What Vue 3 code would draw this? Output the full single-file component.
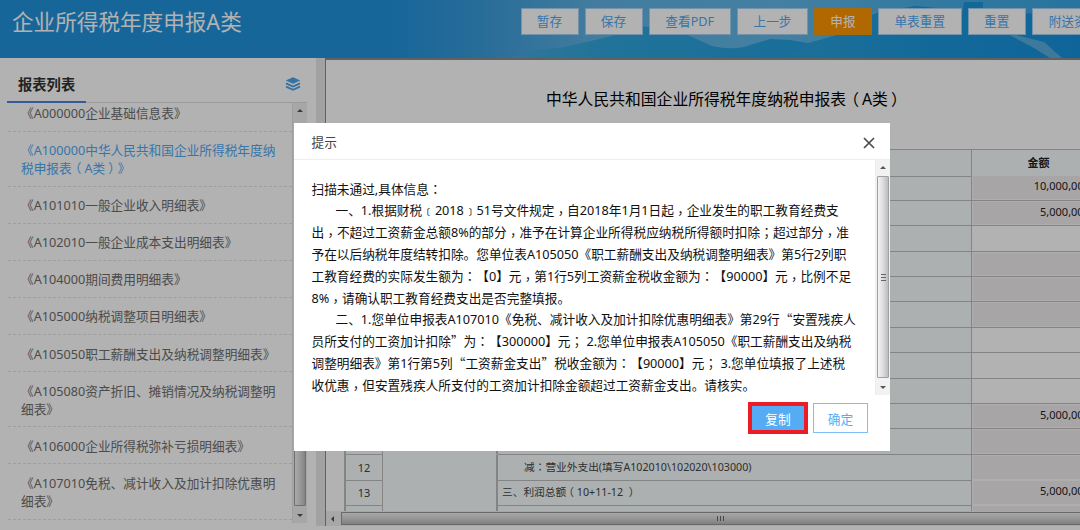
<template>
  <div class="page">
    <header class="top">
      <svg class="scene" viewBox="0 0 1080 58" preserveAspectRatio="none">
        <defs>
          <linearGradient id="sky">
            <stop offset="0.36" stop-color="#2192dd" />
            <stop offset="0.45" stop-color="#3b9ddc" />
            <stop offset="0.55" stop-color="#60b2e3" />
            <stop offset="0.72" stop-color="#62b8e8" />
            <stop offset="0.85" stop-color="#4bafe6" />
            <stop offset="1" stop-color="#3aa6e2" />
          </linearGradient>
          <linearGradient id="hill">
            <stop offset="0" stop-color="#46a8de" />
            <stop offset="0.25" stop-color="#2fa5dc" />
            <stop offset="1" stop-color="#1f9ade" />
          </linearGradient>
          <linearGradient id="near">
            <stop offset="0" stop-color="#2aa2da" />
            <stop offset="0.5" stop-color="#1b97dc" />
            <stop offset="1" stop-color="#1690dc" />
          </linearGradient>
        </defs>
        <rect width="1080" height="58" fill="url(#sky)" />
        <path d="M512 58 L528 50 L560 48 L582 43 L608 37 L628 30 L642 26 L656 28 L690 36 L712 46 Q735 51 750 45 L770 39 L790 40 L808 43 L840 36 L900 30 V58 Z" fill="url(#hill)" />
        <path d="M790 58 L812 42 L840 34 L858 20 L880 12 L915 6 L950 9 L962 14 L964 2 H983 V9 L1010 14 L1080 12 V58 Z" fill="url(#near)" />
        <path d="M1000 30 L1020 36 L1044 42 L1062 58 H1050 L1034 48 Z" fill="#5aaee0" />
      </svg>
      <h1 class="brand">企业所得税年度申报A类</h1>
      <div class="actions">
        <button
          v-for="a in actions"
          :key="a.text"
          class="btn"
          :class="{ active: a.active }"
          :style="{ width: a.width + 'px' }"
        >{{ a.text }}</button>
      </div>
    </header>

    <div class="main">
      <aside class="side">
        <div class="side-head">
          <span class="side-title">报表列表</span>
          <svg class="layers" viewBox="0 0 16 14">
            <path d="M8 0.3 L15.3 3.4 L8 6.7 L0.7 3.4 Z" fill="currentColor" />
            <path d="M1 6.4 L8 9.5 L15 6.4 M1 9.6 L8 12.7 L15 9.6" fill="none" stroke="currentColor" stroke-width="1.8" />
          </svg>
        </div>
        <div class="side-body">
          <ul class="list">
            <li v-for="(r, i) in reports" :key="i" :class="{ current: i === 1 }">
              <div v-for="line in r" :key="line">
                <span v-for="(s, j) in split(line)" :key="j" :class="s.cls">{{ s.text }}</span>
              </div>
            </li>
          </ul>
          <div class="bar">
            <i class="arrow up"></i>
            <div class="thumb side-thumb"></div>
            <i class="arrow down"></i>
          </div>
        </div>
      </aside>

      <section class="sheet">
        <h2 class="sheet-title">
          <span v-for="(s, j) in split('中华人民共和国企业所得税年度纳税申报表（A类）')" :key="j" :class="s.cls">{{ s.text }}</span>
        </h2>
        <div class="grid-wrap">
          <div class="grid">
            <div v-for="(row, i) in rows" :key="i" class="row">
              <div class="cell no">{{ row.no }}</div>
              <div class="cell kind"></div>
              <div class="cell item" :class="{ indent: row.indent }">
                <span v-for="(s, j) in split(row.item || '')" :key="j" :class="s.cls">{{ s.text }}</span>
              </div>
              <div class="cell money" :class="{ head: row.head, filled: row.filled }">{{ row.money }}</div>
            </div>
          </div>
        </div>
        <div class="hbar">
          <i class="arrow left"></i>
          <div class="hthumb"><i class="hgrip"></i></div>
        </div>
      </section>
    </div>

    <div class="mask"></div>

    <div class="dialog">
      <div class="dialog-head">
        <span>提示</span>
        <svg class="close" viewBox="0 0 12 12">
          <path d="M1 1 L11 11 M11 1 L1 11" stroke="#4a4a52" stroke-width="1.7" fill="none" />
        </svg>
      </div>
      <div class="dialog-body">
        <div class="message">
          <div v-for="(l, i) in message" :key="i" class="line" :class="{ first: l.first }">
            <span v-for="(s, j) in split(l.text)" :key="j" :class="s.cls">{{ s.text }}</span>
          </div>
        </div>
        <div class="bar light">
          <i class="arrow up"></i>
          <div class="thumb"><i class="grip"></i></div>
          <i class="arrow down"></i>
        </div>
      </div>
      <div class="dialog-foot">
        <button class="copy">复制</button>
        <button class="ok">确定</button>
      </div>
    </div>
  </div>
</template>

<script setup>
const actions = [
  { text: '暂存', width: 58 },
  { text: '保存', width: 58 },
  { text: '查看PDF', width: 82.5 },
  { text: '上一步', width: 71 },
  { text: '申报', width: 58, active: true },
  { text: '单表重置', width: 83.5 },
  { text: '重置', width: 58.5 },
  { text: '附送资料', width: 84 }
]

const reports = [
  ['《A000000企业基础信息表》'],
  ['《A100000中华人民共和国企业所得税年度纳', '税申报表（A类）》'],
  ['《A101010一般企业收入明细表》'],
  ['《A102010一般企业成本支出明细表》'],
  ['《A104000期间费用明细表》'],
  ['《A105000纳税调整项目明细表》'],
  ['《A105050职工薪酬支出及纳税调整明细表》'],
  ['《A105080资产折旧、摊销情况及纳税调整明', '细表》'],
  ['《A106000企业所得税弥补亏损明细表》'],
  ['《A107010免税、减计收入及加计扣除优惠明', '细表》']
]

const rows = [
  { money: '金额', head: true },
  { money: '10,000,000.00', filled: true },
  { money: '5,000,000.00', filled: true },
  {},
  { filled: true },
  { filled: true },
  { filled: true },
  {},
  {},
  {},
  { money: '5,000,000.00', filled: true },
  { filled: true },
  { no: '12', item: '减：营业外支出(填写A102010\\102020\\103000)', indent: true, filled: true },
  { no: '13', item: '三、利润总额（10+11-12 ）', money: '5,000,000.00', filled: true },
  { filled: true }
]

const message = [
  { text: '扫描未通过,具体信息：' },
  { text: '一、1.根据财税﹝2018﹞51号文件规定，自2018年1月1日起，企业发生的职工教育经费支', first: true },
  { text: '出，不超过工资薪金总额8%的部分，准予在计算企业所得税应纳税所得额时扣除；超过部分，准' },
  { text: '予在以后纳税年度结转扣除。您单位表A105050《职工薪酬支出及纳税调整明细表》第5行2列职' },
  { text: '工教育经费的实际发生额为：【0】元，第1行5列工资薪金税收金额为：【90000】元，比例不足' },
  { text: '8%，请确认职工教育经费支出是否完整填报。' },
  { text: '二、1.您单位申报表A107010《免税、减计收入及加计扣除优惠明细表》第29行“安置残疾人', first: true },
  { text: '员所支付的工资加计扣除”为：【300000】元； 2.您单位申报表A105050《职工薪酬支出及纳税' },
  { text: '调整明细表》第1行第5列“工资薪金支出”税收金额为：【90000】元； 3.您单位填报了上述税' },
  { text: '收优惠，但安置残疾人所支付的工资加计扣除金额超过工资薪金支出。请核实。' }
]

const marks = {
  '“': 'wide',
  '”': 'wide',
  '﹝': 'wide',
  '﹞': 'wide',
  '：': 'mid',
  '，': 'mid low',
  '；': 'mid',
  '（': 'open',
  '）': 'shut'
}

// punctuation gets its own span, so that it sits in the middle of a full em
function split(text) {
  return text
    .split(/([“”﹝﹞：，；（）])/)
    .filter(Boolean)
    .map(s => ({ text: s, cls: marks[s] }))
}
</script>

<style>
body {
  overflow: hidden;
}
</style>

<style scoped>
.page {
  position: relative;
  width: 1080px;
  height: 530px;
  overflow: hidden;
  display: flex;
  flex-direction: column;
  background: #fff;
  font-family: "Noto Sans", "Noto Sans CJK SC", sans-serif;
  font-size: 12.68px;
  white-space: nowrap;
  text-spacing-trim: space-all;
}

h1, h2, ul {
  margin: 0;
  padding: 0;
  list-style: none;
  font-weight: 400;
}

button {
  box-sizing: border-box;
  padding: 0;
  font: inherit;
}

.wide {
  font-family: "Noto Sans CJK SC", sans-serif;
  line-height: 0;
}

.mid {
  font-family: "Noto Sans CJK TC", sans-serif;
  line-height: 0;
}

.low {
  position: relative;
  top: 3px;
}

.open {
  position: relative;
  left: -3px;
}

.shut {
  position: relative;
  left: 3px;
}

.top {
  position: relative;
  flex: none;
  height: 58px;
  display: flex;
  justify-content: space-between;
  align-items: flex-start;
  overflow: hidden;
}

.scene {
  position: absolute;
  inset: 0;
  width: 1080px;
  height: 58px;
}

.brand {
  position: relative;
  padding-left: 12px;
  font-size: 21.6px;
  line-height: 43px;
  color: #fff;
}

.actions {
  position: relative;
  flex: none;
  width: 559.5px;
  padding-top: 8px;
  display: flex;
  gap: 6px;
}

.btn {
  flex: none;
  height: 27px;
  line-height: 25px;
  border: 1px solid #a5d2f5;
  background: #fff;
  color: #4ea9f5;
}

.btn.active {
  border-color: #f09a10;
  background: #ff9500;
  color: #fff;
}

.main {
  flex: 1;
  display: flex;
  min-height: 0;
}

.side {
  width: 309px;
  padding-left: 7px;
  box-sizing: border-box;
  flex: none;
}

.side-head {
  width: 300px;
  height: 45px;
  box-sizing: border-box;
  border-bottom: 1px solid #dedede;
  display: flex;
  justify-content: space-between;
  align-items: flex-start;
}

.side-title {
  width: 79px;
  height: 45px;
  box-sizing: border-box;
  padding-left: 11px;
  line-height: 53px;
  border-bottom: 2px solid #4d83dd;
  font-size: 14.3px;
  font-weight: 700;
  color: #333;
}

.layers {
  width: 16px;
  height: 14px;
  margin: 19px 6px 0 0;
  color: #4ea4e8;
}

.side-body {
  width: 300px;
  height: 420px;
  display: flex;
  overflow: hidden;
}

.list {
  width: 285px;
  margin-top: -8.3px;
  color: #6d6d6d;
}

.list li {
  margin-left: 1px;
  padding: 9.4px 0 8.5px 13px;
  line-height: 18.15px;
  border-bottom: 1px dashed #e2e2e2;
}

.list li.current {
  color: #4ea9f5;
}

.bar {
  width: 14px;
  flex: none;
  display: flex;
  flex-direction: column;
  align-items: center;
  background: #f0f0f0;
  border-left: 1px solid #e4e4e4;
}

.thumb {
  flex: 1;
  width: 12px;
  box-sizing: border-box;
  border: 1px solid #a0a0a0;
  border-radius: 1px;
  background: linear-gradient(90deg, #f3f3f3, #dcdce0 50%, #bcbcc0);
  display: flex;
  align-items: center;
  justify-content: center;
}

.side-thumb {
  margin-top: 39px;
}

.arrow {
  width: 0;
  height: 0;
  border: 3px solid transparent;
}

.arrow.up {
  border-bottom-color: #555;
  margin: 3px 0 7px;
}

.arrow.down {
  border-top-color: #555;
  margin: 8px 0 3px;
}

.arrow.left {
  border-right-color: #555;
  margin: 0 7px 0 2px;
}

.sheet {
  position: relative;
  flex: 1;
  min-width: 0;
  margin: 0 0 4px 7px;
  border-left: 9px solid #e9e9e9;
  display: flex;
  flex-direction: column;
  box-shadow: inset 1px 2px 0 #8c8c8c;
}

.sheet-title {
  height: 91px;
  padding-left: 221px;
  font-size: 15.8px;
  line-height: 83px;
  color: #000;
}

.grid-wrap {
  height: 362px;
  margin-left: 19px;
  overflow: hidden;
}

.grid {
  width: 774px;
  border-top: 1px solid #bdbdbd;
  border-left: 2px solid #bdbdbd;
  box-sizing: border-box;
  background: #f6fdfe;
}

.row {
  height: 25.4px;
  display: grid;
  grid-template-columns: 37px 115px 474px 146px;
  font-size: 10.7px;
  line-height: 25px;
  color: #444;
}

.cell {
  box-sizing: border-box;
  border-right: 1px solid #bdbdbd;
  border-bottom: 1px solid #bdbdbd;
}

.no {
  text-align: center;
  font-size: 11px;
}

.kind {
  border-bottom-color: transparent;
  border-right-width: 2px;
}

.item {
  padding-left: 4px;
}

.item.indent {
  padding-left: 26px;
}

.money {
  background: #fff;
  padding-right: 11.5px;
  text-align: right;
  line-height: 21.5px;
  font-size: 11px;
  color: #222;
}

.money.filled {
  background: #f0ecee;
  box-shadow: inset 1px 1px 0 #fbf9fa, inset 0 -1px 0 #fbf9fa;
}

.money.head {
  background: #f6fdfe;
  padding: 0 12px 0 0;
  text-align: center;
  font-weight: 700;
  line-height: 26px;
}

.hbar {
  height: 15px;
  flex: none;
  margin-left: 1px;
  display: flex;
  align-items: center;
  background: #f0f0f0;
}

.hthumb {
  flex: 1;
  height: 13px;
  box-sizing: border-box;
  border: 1px solid #999;
  border-right: 0;
  background: linear-gradient(#efefef, #dadada 45%, #b7b7b9);
  display: flex;
  align-items: center;
  padding-left: 375px;
}

.hgrip {
  width: 7px;
  height: 5px;
  background: repeating-linear-gradient(90deg, #666 0 1px, transparent 1px 3px);
}

.mask {
  position: absolute;
  inset: 0;
  background: rgba(0, 0, 0, 0.3);
}

.dialog {
  position: absolute;
  left: 294px;
  top: 123px;
  width: 596px;
  height: 328px;
  background: #fff;
}

.dialog-head {
  height: 37px;
  box-sizing: border-box;
  padding: 0 15px 0 17.5px;
  border-bottom: 1px solid #eee;
  display: flex;
  justify-content: space-between;
  align-items: center;
  color: #444;
}

.close {
  width: 12px;
  height: 12px;
  margin-top: 4px;
}

.dialog-body {
  height: 235px;
  display: flex;
  justify-content: space-between;
}

.message {
  padding: 18.6px 0 0 17.5px;
  color: #111;
}

.line {
  height: 21.8px;
  line-height: 21.8px;
}

.line.first {
  padding-left: 24px;
}

.light {
  border-left-color: #eee;
  background: #f2f2f2;
}

.grip {
  width: 5px;
  height: 7px;
  background: repeating-linear-gradient(#666 0 1px, transparent 1px 3px);
}

.dialog-foot {
  display: flex;
  justify-content: flex-end;
  align-items: center;
  gap: 5px;
  margin-top: 7px;
  padding-right: 22px;
}

.copy {
  width: 60px;
  height: 32px;
  border: 4px solid #ed1c24;
  background: #55acf5;
  color: #fff;
}

.ok {
  width: 55px;
  height: 30px;
  border: 1px solid #7cc0f7;
  background: #fff;
  color: #55acf5;
}
</style>
